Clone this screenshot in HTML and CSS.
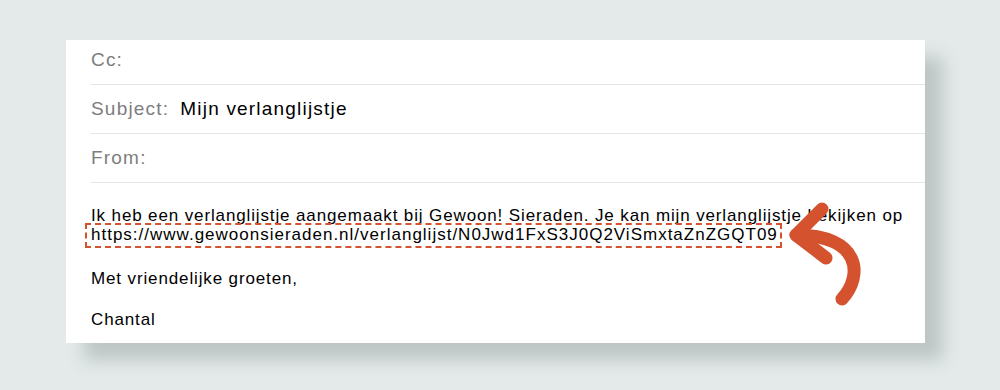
FILE: index.html
```html
<!DOCTYPE html>
<html lang="nl">
<head>
  <meta charset="UTF-8">
  <title>Verlanglijstje delen</title>
  <link rel="stylesheet" href="styles.css">
</head>
<body>
  <div class="mail">
    <div class="fields">
      <div class="row row-first">
        <span class="label">Cc:</span>
      </div>
      <div class="row">
        <span class="label">Subject:</span>
        <span class="value">Mijn verlanglijstje</span>
      </div>
      <div class="row">
        <span class="label">From:</span>
      </div>
    </div>

    <div class="message">
      <p class="intro">Ik heb een verlanglijstje aangemaakt bij Gewoon! Sieraden. Je kan mijn verlanglijstje bekijken op<br><span class="link">https://www.gewoonsieraden.nl/verlanglijst/N0Jwd1FxS3J0Q2ViSmxtaZnZGQT09</span></p>
      <p>Met vriendelijke groeten,</p>
      <p>Chantal</p>
    </div>

    <svg class="arrow" width="90" height="115" viewBox="0 0 90 115">
      <path d="M62 104 C84 80 80 40 16 40" />
      <path d="M42 14 L16 40 L46 63" />
    </svg>
  </div>
</body>
</html>
```

FILE: styles.css
```css
body {
  margin: 0;
  height: 390px;
  overflow: hidden;
  background-color: #e3eae9;
  font-family: 'Liberation Sans', Arial, sans-serif;
  color: #000;
}

.mail {
  position: relative;
  margin: 40px 0 0 66px;
  width: 859px;
  height: 303px;
  background-color: #fff;
  box-shadow: 18px 17px 16px #bec6c5;
}

.fields {
  margin-left: 25px;
}

.row {
  display: flex;
  gap: 11px;
  padding: 14px 0;
  border-bottom: 1px solid #e4e4e4;
  font-size: 19px;
  line-height: 20px;
  letter-spacing: 1.2px;
}

.row-first {
  padding-top: 10px;
}

.label {
  color: #7d7d7d;
}

.value {
  color: #000;
}

.message {
  padding: 23px 0 0 25px;
  font-size: 17px;
  line-height: 19px;
  letter-spacing: 0.87px;
  white-space: nowrap;
}

.message p {
  margin: 0 0 22px;
}

.message .intro {
  margin-bottom: 25px;
}

.link {
  margin-left: -6px;
  padding: 0 2px 2px 4px;
  border: 2px dashed #d4522e;
  letter-spacing: 1px;
}

.arrow {
  position: absolute;
  left: 714px;
  top: 155px;
  fill: none;
  stroke: #d4522e;
  stroke-width: 13;
  stroke-linecap: round;
  stroke-linejoin: round;
}
```
